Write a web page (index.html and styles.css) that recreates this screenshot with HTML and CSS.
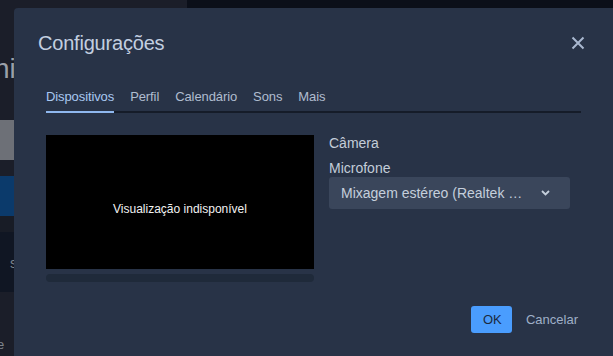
FILE: index.html
```html
<!DOCTYPE html>
<html lang="pt-BR">
<head>
  <meta charset="UTF-8">
  <title>Configurações</title>
  <link rel="stylesheet" href="styles.css">
</head>
<body>
  <div class="backdrop">
    <aside class="side">
      <div class="side-top"><span class="side-heading">ni</span></div>
      <div class="side-gray"></div>
      <div class="side-gap"></div>
      <div class="side-blue"></div>
      <div class="side-gap dark"></div>
      <div class="side-list"><span class="side-glyph">s</span></div>
      <div class="side-rest"><span class="side-tail">e</span></div>
    </aside>

    <div class="main">
      <div class="topbar"><div class="topbar-left"></div></div>

      <div class="dialog">
        <div class="dialog-header">
          <h2 class="dialog-title">Configurações</h2>
          <button class="close-btn" aria-label="Fechar">
            <svg width="14" height="14" viewBox="0 0 14 14">
              <path d="M1.5 1.5 L12.5 12.5 M12.5 1.5 L1.5 12.5" stroke="#a9b8d0" stroke-width="2" fill="none"/>
            </svg>
          </button>
        </div>

        <div class="tabs">
          <div class="tab active">Dispositivos</div>
          <div class="tab">Perfil</div>
          <div class="tab">Calendário</div>
          <div class="tab">Sons</div>
          <div class="tab">Mais</div>
        </div>

        <div class="devices">
          <div class="preview-col">
            <div class="preview">Visualização indisponível</div>
            <div class="level-bar"></div>
          </div>
          <div class="fields">
            <label class="field-label">Câmera</label>
            <label class="field-label">Microfone</label>
            <div class="select">
              <span>Mixagem estéreo (Realtek …</span>
              <svg width="9" height="6" viewBox="0 0 9 6">
                <path d="M1 1 L4.5 4.5 L8 1" stroke="#c5cfdc" stroke-width="1.8" fill="none"/>
              </svg>
            </div>
          </div>
        </div>

        <div class="dialog-footer">
          <button class="btn-ok">OK</button>
          <button class="btn-cancel">Cancelar</button>
        </div>
      </div>
    </div>
  </div>
</body>
</html>
```

FILE: styles.css
```css
body {
  margin: 0;
  font-family: "Liberation Sans", Arial, sans-serif;
  background: #1b1e29;
  overflow: hidden;
}
.backdrop {
  display: flex;
  height: 356px;
}
.side {
  width: 14px;
  flex: none;
  display: flex;
  flex-direction: column;
  overflow: hidden;
  color: #9aa0a9;
}
.side-top {
  height: 120px;
  padding-top: 53px;
  box-sizing: border-box;
  background: #1b1e29;
}
.side-heading {
  display: block;
  margin-left: -6px;
  font-size: 28px;
  line-height: 32px;
  white-space: nowrap;
}
.side-gray {
  height: 40px;
  background: #6d7077;
}
.side-gap {
  height: 16px;
  background: #1b1e29;
}
.side-gap.dark {
  background: #181c26;
}
.side-blue {
  height: 40px;
  background: #0b3a6b;
}
.side-list {
  height: 60px;
  background: #101623;
  padding-top: 24px;
  box-sizing: border-box;
}
.side-glyph {
  display: block;
  margin-left: 10px;
  font-size: 14px;
  line-height: 14px;
  color: #7d838c;
}
.side-rest {
  flex: 1;
  background: #1b1e29;
  padding-top: 46px;
  box-sizing: border-box;
}
.side-tail {
  display: block;
  margin-left: -3px;
  font-size: 13px;
  line-height: 14px;
  color: #7d838c;
}
.main {
  flex: 1;
  display: flex;
  flex-direction: column;
  min-width: 0;
}
.topbar {
  height: 8px;
  flex: none;
  background: #0b0f19;
}
.topbar-left {
  width: 173px;
  height: 100%;
  background: #1b1e29;
}
.dialog {
  flex: 1;
  background: #283347;
  border-top-left-radius: 4px;
}
.dialog-header {
  display: flex;
  align-items: center;
  justify-content: space-between;
  padding: 23px 28px 0 24px;
}
.dialog-title {
  margin: 0;
  font-size: 20px;
  line-height: 24px;
  font-weight: normal;
  color: #c3cfe0;
  letter-spacing: -0.2px;
}
.close-btn {
  background: none;
  border: 0;
  padding: 0;
  width: 14px;
  height: 14px;
  display: flex;
}
.tabs {
  display: flex;
  gap: 16px;
  margin: 34px 32px 0 32px;
  border-bottom: 2px solid #151c29;
  font-size: 13px;
  line-height: 16px;
  color: #b0bdd0;
}
.tab {
  padding-bottom: 6px;
  margin-bottom: -2px;
  border-bottom: 2px solid transparent;
  letter-spacing: -0.1px;
}
.tab.active {
  color: #a9c9f2;
  border-bottom-color: #8fb8ef;
}
.devices {
  display: flex;
  gap: 15px;
  margin: 22px 32px 0 32px;
}
.preview-col {
  width: 268px;
  display: flex;
  flex-direction: column;
  gap: 5px;
}
.preview {
  height: 134px;
  box-sizing: border-box;
  padding-top: 67px;
  background: #000;
  color: #f2f2f2;
  font-size: 12px;
  line-height: 14px;
  text-align: center;
}
.level-bar {
  height: 8px;
  border-radius: 4px;
  background: #1f2a3a;
}
.fields {
  width: 241px;
  display: flex;
  flex-direction: column;
}
.field-label {
  font-size: 14px;
  line-height: 17px;
  color: #c3cdd9;
  margin-bottom: 8px;
}
.field-label:nth-child(2) {
  margin-bottom: 0;
}
.select {
  height: 32px;
  display: flex;
  align-items: center;
  justify-content: space-between;
  padding: 0 20px 0 12px;
  border-radius: 3px;
  background: #3a465b;
  color: #c5cfdc;
  font-size: 14px;
  line-height: 17px;
}
.dialog-footer {
  display: flex;
  justify-content: flex-end;
  gap: 2px;
  margin-top: 24px;
  padding-right: 23px;
}
.dialog-footer button {
  height: 27px;
  border: 0;
  border-radius: 3px;
  font-family: "Liberation Sans", Arial, sans-serif;
  font-size: 13px;
  padding: 0 12px;
}
.btn-ok {
  width: 41px;
  padding: 0;
  background: #4a9dfe;
  color: #1b2a40;
}
.btn-cancel {
  background: none;
  color: #9fb0c8;
}
```
